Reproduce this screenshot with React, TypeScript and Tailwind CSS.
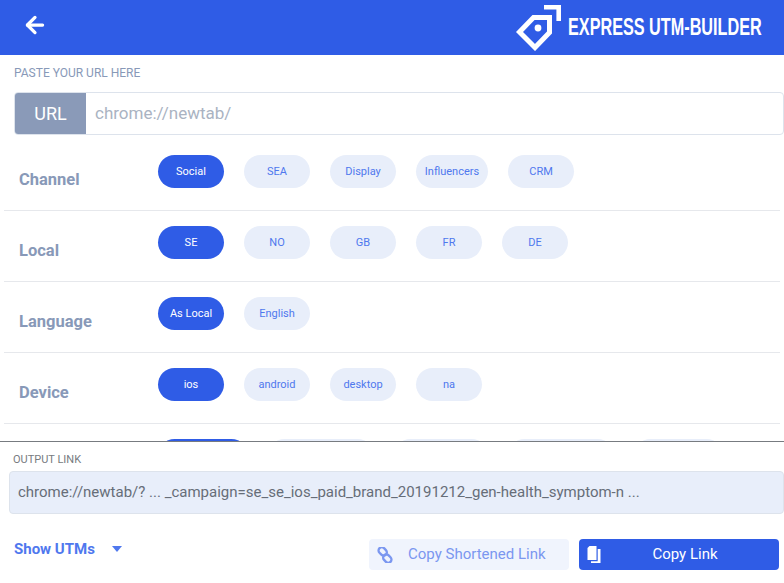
import { ArrowLeft } from 'lucide-react';

const rows = [
  { label: 'Channel', items: [['Social', 'w-[66px]'], ['SEA', 'w-[66px]'], ['Display', 'w-[66px]'], ['Influencers', 'w-[72px]'], ['CRM', 'w-[66px]']] },
  { label: 'Local', items: [['SE', 'w-[66px]'], ['NO', 'w-[66px]'], ['GB', 'w-[66px]'], ['FR', 'w-[66px]'], ['DE', 'w-[66px]']] },
  { label: 'Language', items: [['As Local', 'w-[66px]'], ['English', 'w-[66px]']] },
  { label: 'Device', items: [['ios', 'w-[66px]'], ['android', 'w-[66px]'], ['desktop', 'w-[66px]'], ['na', 'w-[66px]']] },
  // this row is scrolled off under the footer, only the pill tops show
  { label: '', items: [['', 'w-[90px]'], ['', 'w-[106px]'], ['', 'w-[94px]'], ['', 'w-[106px]'], ['', 'w-[89px]']] },
];

function Pill({ text, active, width }: { text: string; active: boolean; width: string }) {
  return (
    <div className={`h-[33px] pt-px rounded-full flex items-center justify-center text-[11px] ${width} ${active ? 'bg-[#2f5ce6] text-white' : 'bg-[#e8eefa] text-[#4f78ee]'}`}>
      {text}
    </div>
  );
}

export default function App() {
  return (
    <div className="h-[583px] w-[784px] flex flex-col overflow-hidden bg-white font-['Roboto',sans-serif]">
      <header className="h-[55px] shrink-0 bg-[#2f5ce6] flex items-center justify-between pl-[22px] pr-[22px]">
        <ArrowLeft size={26} strokeWidth={3} className="text-white -mt-[6px]" />
        <div className="flex items-center gap-[6px] -mt-[1px]">
          <svg width="47" height="48" viewBox="0 0 47 48" fill="none">
            <path d="M29 4.3 H43.7 V18" stroke="white" strokeWidth="4.6" />
            <path d="M4.5 29 L18.5 14.5 H34.5 V29.5 L20 44.5 Z" stroke="white" strokeWidth="5" strokeLinejoin="miter" />
            <circle cx="23" cy="25" r="3.4" fill="white" />
          </svg>
          <div className="w-[194px] h-[24px]">
            <div className="origin-left scale-x-[0.705] whitespace-nowrap font-['Liberation_Sans',sans-serif] font-bold text-[23px] leading-[24px] text-white">EXPRESS UTM-BUILDER</div>
          </div>
        </div>
      </header>

      <main className="flex-1 min-h-0 overflow-hidden">
        <div className="px-[14px] pt-[12px] text-[12px] leading-[13px] text-[#8899b8]">PASTE YOUR URL HERE</div>
        <div className="ml-[14px] mt-[12px] h-[43px] flex rounded border border-[#dde3ec] overflow-hidden">
          <div className="w-[71px] bg-[#8a9ab8] text-white text-[18px] flex items-center justify-center">URL</div>
          <div className="flex-1 pl-[9px] flex items-center text-[17px] text-[#aab3c2]">chrome://newtab/</div>
        </div>
        <div className="mt-[5px] px-1">
          {rows.map((row, i) => (
            <div key={i} className="h-[71px] flex border-b border-[#e6e8ec]">
              <div className="w-[154px] pl-[15px] pt-[30px] text-[16.5px] leading-[19px] font-bold text-[#8899b8]">{row.label}</div>
              <div className="flex gap-5 pt-[15px]">
                {row.items.map(([text, width], j) => (
                  <Pill key={j} text={text} active={j === 0} width={width} />
                ))}
              </div>
            </div>
          ))}
        </div>
      </main>

      <footer className="h-[142px] shrink-0 bg-white border-t border-[#777b80]">
        <div className="pl-[13px] pt-[11px] text-[11px] leading-[13px] text-[#777b80]">OUTPUT LINK</div>
        <div className="ml-[9px] mt-[5px] h-[43px] flex items-center pl-[8px] rounded bg-[#e8eefa] border border-[#dde3ec] text-[15px] text-[#666d78] whitespace-nowrap overflow-hidden">
          chrome://newtab/? ... _campaign=se_se_ios_paid_brand_20191212_gen-health_symptom-n ...
        </div>
        <div className="mt-[25px] flex items-start pr-[5px]">
          <div className="pl-[14px] pt-px flex items-center text-[15px] leading-[18px] font-bold text-[#4f78ee]">
            Show UTMs
            <svg width="10" height="6" viewBox="0 0 10 6" className="ml-[17px]">
              <path d="M0 0 H10 L5 6 Z" fill="#4f78ee" />
            </svg>
          </div>
          <div className="ml-auto flex gap-[10px]">
            <div className="w-[200px] h-[31px] rounded bg-[#f0f4fd] flex items-center text-[15px] text-[#7b97f0] pl-2">
              <svg width="16" height="16" viewBox="0 0 16 16" fill="none" stroke="#7b97f0" strokeWidth="2.4">
                <rect x="1.2" y="1.2" width="9" height="6.4" rx="3.2" transform="rotate(45 5.7 4.4)" />
                <rect x="5.8" y="8.4" width="9" height="6.4" rx="3.2" transform="rotate(45 10.3 11.6)" />
              </svg>
              <span className="ml-[15px]">Copy Shortened Link</span>
            </div>
            <div className="w-[200px] h-[31px] rounded bg-[#2f5ce6] flex items-center text-[15px] text-white pl-2">
              <svg width="14" height="17" viewBox="0 0 14 17">
                <path d="M2.5 0 H9.5 V14 H0.5 V2 Z" fill="white" />
                <path d="M10.7 3 H13.5 V17 H4 V15.3 H10.7 Z" fill="white" />
              </svg>
              <span className="flex-1 text-center pr-[10px]">Copy Link</span>
            </div>
          </div>
        </div>
      </footer>
    </div>
  );
}
